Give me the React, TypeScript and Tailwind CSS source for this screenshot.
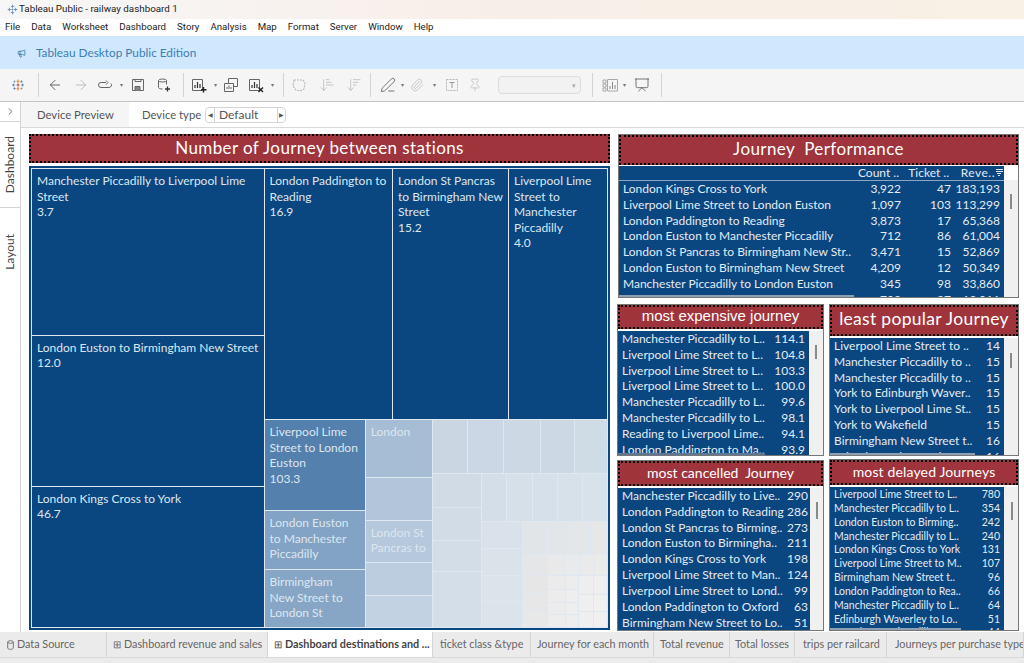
import { ArrowLeft, ArrowRight, ArrowDownNarrowWide, ArrowDownWideNarrow, ChevronRight, Megaphone, Paperclip, PenLine, Pin, Presentation } from 'lucide-react'

const MENU = ['File', 'Data', 'Worksheet', 'Dashboard', 'Story', 'Analysis', 'Map', 'Format', 'Server', 'Window', 'Help']

function Logo() {
  return (
    <svg width="16" height="16" viewBox="0 0 16 16" fill="none" strokeWidth="1.100">
      <path d="M8 2.500v3.500M6.500 4.200h3M8 10v3.500M6.500 11.800h3" stroke="#e8903f" />
      <path d="M3.500 6.500v3M2 8h3M12.500 6.500v3M11 8h3" stroke="#6c93b8" />
      <path d="M8 6.500v3M6.500 8h3" stroke="#d0455a" />
      <path d="M4.500 3.500v2M3.500 4.500h2M11.500 10.500v2M10.500 11.500h2" stroke="#7ba0b0" />
      <path d="M11.500 3.500v2M10.500 4.500h2M4.500 10.500v2M3.500 11.500h2" stroke="#5a78a5" />
    </svg>
  )
}

function TitleLogo() {
  return (
    <svg width="11" height="11" viewBox="0 0 16 16" fill="none" strokeWidth="1.400" stroke="#6f97c6">
      <path d="M8 1v5M5.500 3.500h5M8 10v5M5.500 12.500h5M1 8h5M3.500 5.500v5M10 8h5M12.500 5.500v5M6.500 8h3M8 6.500v3" />
    </svg>
  )
}

function Caret() {
  return <div className="w-1 h-1 flex items-center justify-center text-[#777] text-[6px] leading-none">▾</div>
}

function Sep({ cls }: { cls: string }) {
  return <div className={`w-px h-[24px] bg-[#d4d4d4] ${cls}`} />
}

function LoopIcon() {
  return (
    <svg width="16" height="16" viewBox="0 0 16 16" fill="none" stroke="#666" strokeWidth="1">
      <path d="M9 5.500H4a2.500 2.500 0 0 0 0 5h8a2.500 2.500 0 0 0 2-4" />
      <path d="M9 3.500l2 2-2 2" />
    </svg>
  )
}

function SaveIcon() {
  return (
    <svg width="16" height="16" viewBox="0 0 16 16" fill="none" stroke="#666" strokeWidth="1">
      <path d="M2.500 2.500h11v11h-11z" />
      <path d="M5 13.500v-4h5v4" fill="#888" />
      <path d="M5 2.500v2h6v-2" />
    </svg>
  )
}

function DbPlusIcon() {
  return (
    <svg width="16" height="16" viewBox="0 0 16 16" fill="none" stroke="#666" strokeWidth="1">
      <ellipse cx="6.500" cy="3.500" rx="4" ry="1.500" />
      <path d="M2.500 3.500v7c0 .8 1.500 1.500 4 1.500M10.500 3.500v4" />
      <path d="M11.500 9.500v5M9 12h5" stroke="#333" strokeWidth="1.300" />
    </svg>
  )
}

function ChartIcon({ mark }: { mark: 'plus' | 'x' }) {
  return (
    <svg width="16" height="16" viewBox="0 0 16 16" fill="none" stroke="#666" strokeWidth="1">
      <path d="M1.500 2.500h10v11h-10z" />
      <path d="M4 11V8M6.500 11V5M9 11V7" stroke="#333" strokeWidth="1.200" />
      {mark === 'plus' && <path d="M12.500 10v5.500M10 12.800h5.500" stroke="#222" strokeWidth="1.400" />}
      {mark === 'x' && <path d="M10.500 10.500l4.500 4.500M15 10.500l-4.500 4.500" stroke="#222" strokeWidth="1.400" />}
    </svg>
  )
}

function DupIcon() {
  return (
    <svg width="16" height="16" viewBox="0 0 16 16" fill="none" stroke="#666" strokeWidth="1">
      <path d="M5.500 1.500h9v8h-9z" />
      <path d="M1.500 6.500h9v8h-9z" fill="#f5f5f5" />
      <path d="M4 12V10M6 12V8.500M8 12V10" stroke="#666" />
    </svg>
  )
}

function LassoIcon() {
  return (
    <svg width="16" height="16" viewBox="0 0 16 16" fill="none" stroke="#b5b5b5" strokeWidth="1.100" strokeDasharray="2 1">
      <path d="M3 3h9l2 3-1 6-4 2-4-1-3-4z" />
    </svg>
  )
}

function TextBoxIcon() {
  return (
    <svg width="16" height="16" viewBox="0 0 16 16" fill="none" stroke="#b5b5b5" strokeWidth="1">
      <path d="M2.500 2.500h11v11h-11z" strokeDasharray="2 1" />
      <path d="M5.500 5.500h5M8 5.500v5.500" stroke="#999" />
    </svg>
  )
}

function ShowMeIcon() {
  return (
    <svg width="16" height="16" viewBox="0 0 16 16" fill="none" stroke="#a8a8a8" strokeWidth="1">
      <path d="M1 3h3v3H1zM1 7h3v3H1zM1 11h3v3H1z" />
      <path d="M5.500 2.500h10v11.500h-10z" />
      <path d="M8 12V9M10.500 12V5M13 12V8" stroke="#888" />
    </svg>
  )
}

function SortIcon() {
  return (
    <svg width="7" height="8" viewBox="0 0 7 8" fill="none" stroke="#dfe7ef" strokeWidth="1">
      <path d="M0 .5h7M0 2.500h7M1 4.500h4M2 6.500h2" />
    </svg>
  )
}

function DbSmall() {
  return (
    <svg width="7" height="10" viewBox="0 0 7 10" fill="none" stroke="#777" strokeWidth="1">
      <ellipse cx="3.500" cy="2" rx="2.800" ry="1.300" />
      <path d="M.7 2v6c0 .7 1.200 1.300 2.800 1.300s2.800-.6 2.800-1.300V2" />
    </svg>
  )
}

function Toolbar() {
  return (
    <div className="h-[33px] bg-[#f5f5f5] border-b border-[#c4c4c4] flex items-center">
      <div className="ml-[10px] w-4"><Logo /></div>
      <Sep cls="ml-[12px]" />
      <div className="ml-[8px] w-4"><ArrowLeft size={16} strokeWidth={1.300} color="#555" /></div>
      <div className="ml-[10px] w-4"><ArrowRight size={16} strokeWidth={1.200} color="#b0b0b0" /></div>
      <div className="ml-[8px] w-4"><LoopIcon /></div>
      <div className="ml-[6px]"><Caret /></div>
      <div className="ml-[7px] w-4"><SaveIcon /></div>
      <div className="ml-[10px] w-4"><DbPlusIcon /></div>
      <Sep cls="ml-[11px]" />
      <div className="ml-[7px] w-4"><ChartIcon mark="plus" /></div>
      <div className="ml-[6px]"><Caret /></div>
      <div className="ml-[6px] w-4"><DupIcon /></div>
      <div className="ml-[9px] w-4"><ChartIcon mark="x" /></div>
      <div className="ml-[6px]"><Caret /></div>
      <Sep cls="ml-[9px]" />
      <div className="ml-[7px] w-4"><LassoIcon /></div>
      <div className="ml-[12px] w-4"><ArrowDownNarrowWide size={16} strokeWidth={1.100} color="#b5b5b5" /></div>
      <div className="ml-[11px] w-4"><ArrowDownWideNarrow size={16} strokeWidth={1.100} color="#b5b5b5" /></div>
      <Sep cls="ml-[8px]" />
      <div className="ml-[9px] w-4"><PenLine size={16} strokeWidth={1.200} color="#555" /></div>
      <div className="ml-[4px]"><Caret /></div>
      <div className="ml-[6px] w-4"><Paperclip size={14} strokeWidth={1.200} color="#b5b5b5" /></div>
      <div className="ml-[6px]"><Caret /></div>
      <div className="ml-[8px] w-4"><TextBoxIcon /></div>
      <div className="ml-[8px] w-4"><Pin size={14} strokeWidth={1.100} color="#b5b5b5" /></div>
      <div className="ml-[14px] w-[83px] h-[18px] rounded-sm border border-[#dcdcdc] bg-[#f2f2f2] flex items-center justify-end pr-1 text-[#aaa] text-[7px]">▾</div>
      <Sep cls="ml-[11px]" />
      <div className="ml-[9px] w-4"><ShowMeIcon /></div>
      <div className="ml-[4px]"><Caret /></div>
      <div className="ml-[8px] w-4"><Presentation size={16} strokeWidth={1.200} color="#555" /></div>
      <Sep cls="ml-[11px]" />
    </div>
  )
}

type Node = {
  s: number
  bg?: string
  text?: string[]
  dir?: 'row' | 'col'
  kids?: Node[]
}

const cell = (s: number, bg: string, text?: string[]): Node => ({ s, bg, text })
const row = (s: number, kids: Node[]): Node => ({ s, dir: 'row', kids })
const col = (s: number, kids: Node[]): Node => ({ s, dir: 'col', kids })

const DARK = 'bg-[#0a4680]'

const TREE: Node = row(575, [
  col(232, [
    cell(167, DARK, ['Manchester Piccadilly to Liverpool Lime', 'Street', '3.7']),
    cell(151, DARK, ['London Euston to Birmingham New Street', '12.0']),
    cell(141, DARK, ['London Kings Cross to York', '46.7']),
  ]),
  col(343, [
    row(252, [
      cell(129, DARK, ['London Paddington to', 'Reading', '16.9']),
      cell(116, DARK, ['London St Pancras', 'to Birmingham New', 'Street', '15.2']),
      cell(98, DARK, ['Liverpool Lime', 'Street to', 'Manchester', 'Piccadilly', '4.0']),
    ]),
    row(208, [
      col(101, [
        cell(93, 'bg-[#5380ad]', ['Liverpool Lime', 'Street to London', 'Euston', '103.3']),
        cell(58, 'bg-[#82a3c4]', ['London Euston', 'to Manchester', 'Piccadilly']),
        cell(57, 'bg-[#87a6c6]', ['Birmingham', 'New Street to', 'London St']),
      ]),
      col(67, [
        cell(60, 'bg-[#a7bdd5]', ['London']),
        cell(43, 'bg-[#b2c5da]'),
        cell(42, 'bg-[#b6c8dc]', ['London St', 'Pancras to']),
        cell(32, 'bg-[#bccddf]'),
        cell(31, 'bg-[#c3d2e2]'),
      ]),
      col(175, [
        row(53, [
          cell(35, 'bg-[#cad7e3]'),
          cell(36, 'bg-[#cbd7e4]'),
          cell(37, 'bg-[#ccd8e4]'),
          cell(34, 'bg-[#ccd9e5]'),
          cell(33, 'bg-[#cfdbe5]'),
        ]),
        row(155, [
          col(48, [
            cell(34, 'bg-[#d0dbe6]'),
            cell(33, 'bg-[#d1dce6]'),
            cell(30, 'bg-[#d3dde7]'),
            cell(59, 'bg-[#d4dee8]'),
          ]),
          col(127, [
            row(48, [
              cell(26, 'bg-[#d3dee8]'),
              cell(26, 'bg-[#d5e0e9]'),
              cell(25, 'bg-[#d6e0ea]'),
              cell(25, 'bg-[#d7e1ea]'),
              cell(25, 'bg-[#d8e2ea]'),
            ]),
            row(108, [
              col(41, [
                cell(28, 'bg-[#d9e2ea]'),
                cell(28, 'bg-[#dae3ea]'),
                cell(26, 'bg-[#dbe3eb]'),
                cell(26, 'bg-[#dce4eb]'),
              ]),
              col(86, [
                row(34, [
                  cell(25, 'bg-[#e2e5e8]'),
                  cell(24, 'bg-[#e3e6e8]'),
                  cell(21, 'bg-[#e4e6e8]'),
                  cell(16, 'bg-[#e5e7e8]'),
                ]),
                row(74, [
                  col(25, [
                    cell(20, 'bg-[#e5e6e7]'),
                    cell(20, 'bg-[#e6e6e7]'),
                    cell(17, 'bg-[#e7e7e7]'),
                    cell(17, 'bg-[#e8e8e8]'),
                  ]),
                  col(61, [
                    row(21, [
                      cell(18, 'bg-[#e9e9ea]'),
                      cell(17, 'bg-[#e9eaeb]'),
                      cell(14, 'bg-[#eaeaeb]'),
                      cell(12, 'bg-[#ebebeb]'),
                    ]),
                    row(53, [
                      col(18, [
                        cell(14, 'bg-[#ebebeb]'),
                        cell(13, 'bg-[#ececec]'),
                        cell(13, 'bg-[#ececec]'),
                        cell(13, 'bg-[#ededed]'),
                      ]),
                      col(14, [
                        cell(14, 'bg-[#ededed]'),
                        cell(13, 'bg-[#eeeeee]'),
                        cell(13, 'bg-[#eeeeee]'),
                        cell(13, 'bg-[#eeeeee]'),
                      ]),
                      col(15, [
                        cell(20, 'bg-[#eeeeee]'),
                        cell(17, 'bg-[#efefef]'),
                        cell(16, 'bg-[#efefef]'),
                      ]),
                      col(14, [
                        cell(20, 'bg-[#efefef]'),
                        cell(17, 'bg-[#f0f0f0]'),
                        cell(16, 'bg-[#f0f0f0]'),
                      ]),
                    ]),
                  ]),
                ]),
              ]),
            ]),
          ]),
        ]),
      ]),
    ]),
  ]),
])

function TreeNode({ node }: { node: Node }) {
  const flex = { flex: `${node.s} ${node.s} 0px` }
  if (node.kids) {
    return (
      <div style={flex} className={`flex gap-px min-w-0 min-h-0 ${node.dir === 'row' ? 'flex-row' : 'flex-col'}`}>
        {node.kids.map((k, i) => (
          <TreeNode key={i} node={k} />
        ))}
      </div>
    )
  }
  return (
    <div style={flex} className={`min-w-0 min-h-0 overflow-hidden pl-[5px] pt-[4px] text-[12px] leading-[15.500px] text-[#dde6ef] ${node.bg}`}>
      {node.text?.map((t, i) => (
        <div key={i} className="whitespace-nowrap">{t}</div>
      ))}
    </div>
  )
}

type Row = { name: string; value: string }

function RedTitle({ title, cls }: { title: string; cls: string }) {
  return (
    <div className={`shrink-0 bg-[#a0343c] border-2 border-dotted border-black flex items-center justify-center pb-[2px] text-white ${cls}`}>
      {title}
    </div>
  )
}

function ListPanel({
  title,
  titleCls,
  frameCls,
  blueCls,
  trackCls,
  thumbCls,
  rowCls,
  valCls,
  barCls,
  rows,
}: {
  title: string
  titleCls: string
  frameCls: string
  blueCls: string
  trackCls: string
  thumbCls: string
  rowCls: string
  valCls: string
  barCls?: string
  rows: Row[]
}) {
  return (
    <div className={`relative flex flex-col border border-[#777] bg-white ${frameCls}`}>
      <RedTitle title={title} cls={titleCls} />
      <div className="flex flex-1 min-h-0 mt-[2px]">
        <div className={`bg-[#0a4680] overflow-hidden text-[#e4ebf2] ${blueCls}`}>
          {rows.map((r, i) => (
            <div key={i} className={`flex items-center justify-between ${rowCls}`}>
              <span className="whitespace-nowrap">{r.name}</span>
              <span className={`text-right ${valCls}`}>{r.value}</span>
            </div>
          ))}
        </div>
        <div className={`flex-1 bg-[#f0f0f0] ${trackCls}`}>
          <div className={`w-[2px] bg-[#8a8a8a] ${thumbCls}`} />
        </div>
      </div>
      {barCls && <div className={`absolute left-0 bottom-0 h-[2px] ${barCls}`} />}
    </div>
  )
}

const PERF = [
  ['London Kings Cross to York', '3,922', '47', '183,193'],
  ['Liverpool Lime Street to London Euston', '1,097', '103', '113,299'],
  ['London Paddington to Reading', '3,873', '17', '65,368'],
  ['London Euston to Manchester Piccadilly', '712', '86', '61,004'],
  ['London St Pancras to Birmingham New Str..', '3,471', '15', '52,869'],
  ['London Euston to Birmingham New Street', '4,209', '12', '50,349'],
  ['Manchester Piccadilly to London Euston', '345', '98', '33,860'],
  ['Birmingham New Street to London St P..', '702', '27', '19,011'],
]

const toRows = (list: [string, string][]): Row[] => list.map(([name, value]) => ({ name, value }))

const EXPENSIVE = toRows([
  ['Manchester Piccadilly to L..', '114.1'],
  ['Liverpool Lime Street to L..', '104.8'],
  ['Liverpool Lime Street to L..', '103.3'],
  ['Liverpool Lime Street to L..', '100.0'],
  ['Manchester Piccadilly to L..', '99.6'],
  ['Manchester Piccadilly to L..', '98.1'],
  ['Reading to Liverpool Lime..', '94.1'],
  ['London Paddington to Ma..', '93.9'],
])

const LEAST = toRows([
  ['Liverpool Lime Street to ..', '14'],
  ['Manchester Piccadilly to ..', '15'],
  ['Manchester Piccadilly to ..', '15'],
  ['York to Edinburgh Waver..', '15'],
  ['York to Liverpool Lime St..', '15'],
  ['York to Wakefield', '15'],
  ['Birmingham New Street t..', '16'],
  ['Bristol Temple Meads to ..', '16'],
])

const CANCELLED = toRows([
  ['Manchester Piccadilly to Live..', '290'],
  ['London Paddington to Reading', '286'],
  ['London St Pancras to Birming..', '273'],
  ['London Euston to Birmingha..', '211'],
  ['London Kings Cross to York', '198'],
  ['Liverpool Lime Street to Man..', '124'],
  ['Liverpool Lime Street to Lond..', '99'],
  ['London Paddington to Oxford', '63'],
  ['Birmingham New Street to Lo..', '51'],
])

const DELAYED = toRows([
  ['Liverpool Lime Street to L..', '780'],
  ['Manchester Piccadilly to L..', '354'],
  ['London Euston to Birming..', '242'],
  ['Manchester Piccadilly to L..', '240'],
  ['London Kings Cross to York', '131'],
  ['Liverpool Lime Street to M..', '107'],
  ['Birmingham New Street t..', '96'],
  ['London Paddington to Rea..', '66'],
  ['Manchester Piccadilly to L..', '64'],
  ['Edinburgh Waverley to Lo..', '51'],
  ['Manchester Piccadilly to L..', '44'],
])

const TABS = [
  { label: 'Data Source', cls: 'w-[107px] pl-[7px]', icon: 'db' },
  { label: 'Dashboard revenue and sales', cls: 'w-[161px] pl-[6px]', icon: 'grid' },
  { label: 'Dashboard destinations and ...', cls: 'w-[165px] pl-[6px] bg-white font-bold text-[#444]', icon: 'grid' },
  { label: 'ticket class &type', cls: 'w-[98px] pl-[7px]' },
  { label: 'Journey for each month', cls: 'w-[123px] pl-[6px]' },
  { label: 'Total revenue', cls: 'w-[76px] pl-[6px]' },
  { label: 'Total losses', cls: 'w-[65px] pl-[5px]' },
  { label: 'trips per railcard', cls: 'w-[92px] pl-[8px]' },
  { label: 'Journeys per purchase type', cls: 'flex-1 pl-[8px]' },
]

export default function App() {
  return (
    <div className="w-[1024px] h-[663px] overflow-hidden bg-white flex flex-col font-['Lato',sans-serif] text-[#333]">
      <div className="h-[19px] shrink-0 bg-gradient-to-r from-[#f7f7f7] via-[#f8eee8] to-[#f8f1e5] flex items-center pl-[7px] gap-px font-['Roboto',sans-serif] text-[9.800px] text-[#222]">
        <TitleLogo />
        <span>Tableau Public - railway dashboard 1</span>
      </div>
      <div className="h-[17px] shrink-0 flex items-center gap-[11px] pl-[5px] font-['Roboto',sans-serif] text-[9.700px] text-[#222]">
        {MENU.map((m) => (
          <span key={m}>{m}</span>
        ))}
      </div>
      <div className="h-[33px] shrink-0 bg-[#cfe8fd] flex items-center pl-[17px] gap-[10px] pt-[1px] text-[11.800px] text-[#3c80b2]">
        <Megaphone size={9} color="#2f6f9f" />
        <span>Tableau Desktop Public Edition</span>
      </div>
      <Toolbar />
      <div className="flex flex-1 min-h-0">
        <div className="w-[21px] shrink-0 border-r border-[#d4d4d4] flex flex-col text-[12px] text-[#444]">
          <div className="h-[20px] border-b border-[#d4d4d4] flex items-center justify-center">
            <ChevronRight size={11} color="#666" />
          </div>
          <div className="h-[86px] border-b border-[#d4d4d4] flex items-center justify-center">
            <span className="[writing-mode:vertical-rl] rotate-180">Dashboard</span>
          </div>
          <div className="h-[88px] flex items-center justify-center">
            <span className="[writing-mode:vertical-rl] rotate-180">Layout</span>
          </div>
        </div>
        <div className="flex-1 min-w-0 flex flex-col">
          <div className="h-[26px] shrink-0 border-b border-[#d9d9d9] flex items-center text-[11.300px] text-[#555]">
            <div className="w-[108px] h-full bg-[#f5f5f5] flex items-center pl-4 pt-px">Device Preview</div>
            <span className="ml-[13px] w-[63px] pt-px">Device type</span>
            <div className="w-[81px] h-[16px] border border-[#d4d4d4] rounded-sm flex items-center text-[#555] text-[12px]">
              <span className="w-[9px] border-r border-[#d4d4d4] text-[6px] text-center leading-[14px]">◀</span>
              <span className="flex-1 pl-[4px] leading-[14px]">Default</span>
              <span className="w-[8px] border-l border-[#d4d4d4] text-[6px] text-center leading-[14px]">▶</span>
            </div>
          </div>
          <div className="flex-1 min-h-0 flex pl-2 pt-[6px] gap-[7px] bg-white">
            <div className="w-[581px] h-[497px] flex flex-col gap-[3px]">
              <RedTitle title="Number of Journey between stations" cls="h-[29px] text-[17px] tracking-[0.4px]" />
              <div className="h-[464px] border-2 border-[#0a4680] p-px flex bg-[#dfe8f0]">
                <TreeNode node={TREE} />
              </div>
            </div>
            <div className="w-[402px] flex flex-col">
              <div className="relative ml-px w-[401px] h-[164px] border border-[#777] flex flex-col bg-white">
                <RedTitle title="Journey  Performance" cls="h-[30px] text-[17px] tracking-[0.4px] whitespace-pre" />
                <div className="flex flex-1 min-h-0 mt-px">
                  <div className="w-[385px] bg-[#0a4680] overflow-hidden text-[12px] text-[#e4ebf2]">
                    <div className="h-[15px] flex items-center pr-[1px] border-b border-[#8ba7c4]">
                      <span className="flex-1 text-right">Count ..</span>
                      <span className="w-[50px] text-right">Ticket ..</span>
                      <span className="w-[46px] text-right tracking-[0.5px]">Reve..</span>
                      <span className="ml-[1px] w-[7px]"><SortIcon /></span>
                    </div>
                    {PERF.map((r) => (
                      <div key={r[0]} className="h-[15.850px] flex items-center pl-1 pr-[4px]">
                        <span className="flex-1 whitespace-nowrap overflow-hidden">{r[0]}</span>
                        <span className="w-[42px] text-right">{r[1]}</span>
                        <span className="w-[50px] text-right">{r[2]}</span>
                        <span className="w-[49px] text-right">{r[3]}</span>
                      </div>
                    ))}
                  </div>
                  <div className="flex-1 bg-[#f0f0f0] mt-[14px] pt-[14px] pl-[6px]">
                    <div className="w-[2px] h-[15px] bg-[#8a8a8a]" />
                  </div>
                </div>
                <div className="absolute left-0 bottom-0 w-[235px] h-[2px] bg-[#8d9fb2]" />
              </div>
              <div className="flex gap-[5px] mt-[6px] h-[152px]">
                <ListPanel
                  title="most expensive journey"
                  titleCls="h-[24px] text-[15px] font-['Liberation_Sans',sans-serif]"
                  frameCls="w-[207px]"
                  blueCls="w-[191px] text-[12px] pl-1 pr-[4px]"
                  trackCls="pl-[6px] pt-[14px]"
                  thumbCls="h-[14px]"
                  rowCls="h-[15.850px]"
                  valCls="w-[34px]"
                  barCls="w-[147px] bg-[#5d7896]"
                  rows={EXPENSIVE}
                />
                <ListPanel
                  title="least popular Journey"
                  titleCls="h-[31px] text-[17.500px] tracking-[0.3px]"
                  frameCls="w-[190px]"
                  blueCls="w-[174px] text-[12px] pl-1 pr-[4px]"
                  trackCls="pl-[6px] pt-[15px]"
                  thumbCls="h-[15px]"
                  rowCls="h-[15.850px]"
                  valCls="w-[20px]"
                  barCls="w-[145px] bg-[#8d9fb2]"
                  rows={LEAST}
                />
              </div>
              <div className="flex gap-[5px] mt-[3px] h-[172px]">
                <ListPanel
                  title="most cancelled  Journey"
                  titleCls="h-[25px] text-[14px] whitespace-pre"
                  frameCls="w-[207px] mt-px"
                  blueCls="w-[192px] text-[12px] pl-1 pr-[2px]"
                  trackCls="pl-[6px] pt-[14px]"
                  thumbCls="h-[17px]"
                  rowCls="h-[15.850px]"
                  valCls="w-[24px]"
                  rows={CANCELLED}
                />
                <ListPanel
                  title="most delayed Journeys"
                  titleCls="h-[25px] text-[14px] tracking-[0.15px]"
                  frameCls="w-[190px]"
                  blueCls="w-[174px] text-[10.500px] pl-1 pr-[4px] pt-px"
                  trackCls="pl-[7px] pt-[15px]"
                  thumbCls="h-[18px]"
                  rowCls="h-[13.850px]"
                  valCls="w-[24px]"
                  barCls="w-[131px] bg-[#8d9fb2]"
                  rows={DELAYED}
                />
              </div>
            </div>
          </div>
        </div>
      </div>
      <div className="h-[31px] shrink-0 bg-[#ebebeb] flex flex-col">
        <div className="h-[25px] flex items-stretch text-[10.800px] text-[#666]">
          {TABS.map((t) => (
            <div key={t.label} className={`flex items-center gap-[3px] border-r border-[#d6d6d6] whitespace-nowrap overflow-hidden ${t.cls}`}>
              {t.icon === 'grid' && <span className="text-[10px] font-normal">⊞</span>}
              {t.icon === 'db' && <DbSmall />}
              <span>{t.label}</span>
            </div>
          ))}
        </div>
        <div className="flex-1 border-t border-[#d9d9d9]" />
      </div>
    </div>
  )
}
